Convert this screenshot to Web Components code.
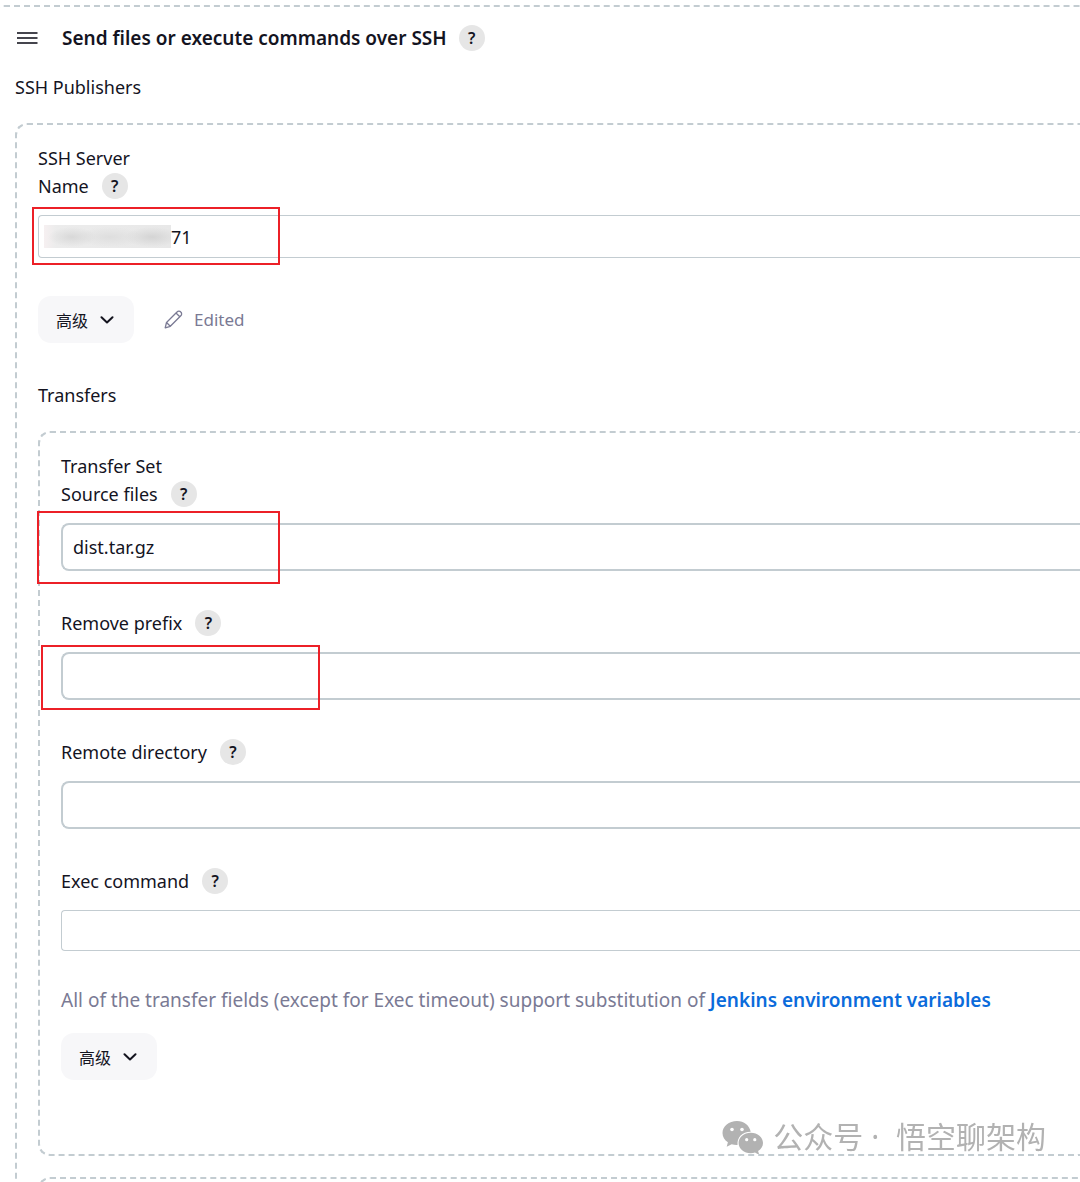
<!DOCTYPE html>
<html lang="en">
<head>
<meta charset="utf-8">
<title>SSH Publishers</title>
<style>
    html {
        overflow: hidden;
    }

    body {
        --text: #14141f;
        --muted: #7a7a94;
        --line: #c3ccd1;
        margin: 0;
        padding-top: 5px;
        background: #fff;
        color: var(--text);
        font: 18px/28px "Noto Sans", "Noto Sans CJK SC", sans-serif;
    }

    .outer {
        margin-left: -8px;
    }

    .server {
        margin-top: 22px;
    }

    .actions {
        display: flex;
        align-items: center;
        gap: 30px;
        margin: 38px 0;
    }

    .sets {
        display: grid;
        gap: 21px;
        margin-top: 22px;
    }

    .fields {
        display: grid;
        gap: 38px;
    }

    .note {
        margin: 35px 0 19px;
        color: var(--muted);
        font-size: 19px;
    }

    .note a {
        color: #0b6bdb;
        font-weight: 600;
        text-decoration: none;
    }

    .last {
        margin-bottom: 74px;
    }
</style>
</head>
<body>
<dashed-box class="outer">
    <section-title>Send files or execute commands over SSH</section-title>
    <div>SSH Publishers</div>
    <dashed-box class="server">
        <div>SSH Server</div>
        <form-field label="Name" type="select" value="71">
            <red-frame style="--x: -6px; --y: -8px; --w: 248px; --h: 58px"></red-frame>
        </form-field>
        <div class="actions">
            <advanced-button>高级</advanced-button>
            <edited-hint>Edited</edited-hint>
        </div>
        <div>Transfers</div>
        <div class="sets">
            <dashed-box>
                <div>Transfer Set</div>
                <div class="fields">
                    <form-field label="Source files" value="dist.tar.gz">
                        <red-frame style="--x: -24px; --y: -12px; --w: 243px; --h: 73px"></red-frame>
                    </form-field>
                    <form-field label="Remove prefix">
                        <red-frame style="--x: -20px; --y: -7px; --w: 279px; --h: 65px"></red-frame>
                    </form-field>
                    <form-field label="Remote directory"></form-field>
                    <form-field label="Exec command" type="textarea"></form-field>
                </div>
                <p class="note">All of the transfer fields (except for Exec timeout) support substitution of <a href="#env">Jenkins environment variables</a></p>
                <advanced-button class="last">高级</advanced-button>
            </dashed-box>
            <dashed-box></dashed-box>
        </div>
    </dashed-box>
</dashed-box>
<account-mark></account-mark>

<script>
/* 虚线容器 */
class DashedBox extends HTMLElement {
    constructor() {
        super();
        this.attachShadow({ mode: 'open' });
        this.shadowRoot.innerHTML = `
            <style>
                :host {
                    display: block;
                    box-sizing: border-box;
                    min-height: 48px;
                    padding: 19px 0 0 21px;
                    border: 2px dashed var(--line);
                    border-right: 0;
                    border-radius: 12px 0 0 12px;
                }
                :host(.outer) {
                    padding-top: 16px;
                }
            </style>
            <slot></slot>
        `;
    }
}

/* 圆形帮助按钮 */
class HelpButton extends HTMLElement {
    constructor() {
        super();
        this.attachShadow({ mode: 'open' });
        this.shadowRoot.innerHTML = `
            <style>
                :host {
                    display: inline-flex;
                }
                button {
                    width: 26px;
                    height: 26px;
                    padding: 0;
                    border: 0;
                    border-radius: 50%;
                    background: #e6e6e6;
                    color: var(--text);
                    font: 600 16px/26px "Noto Sans", sans-serif;
                    cursor: pointer;
                }
            </style>
            <button type="button">?</button>
        `;
    }
}

/* 带拖动图标的标题 */
class SectionTitle extends HTMLElement {
    constructor() {
        super();
        this.attachShadow({ mode: 'open' });
        this.shadowRoot.innerHTML = `
            <style>
                :host {
                    display: flex;
                    align-items: center;
                    height: 30px;
                    margin-bottom: 20px;
                }
                svg {
                    margin: 0 24px 0 2px;
                }
                h2 {
                    margin: 0 12px 0 0;
                    font-size: 19px;
                    font-weight: 600;
                }
            </style>
            <svg width="21" height="14" viewBox="0 0 21 14" stroke="#45454d" stroke-width="2" aria-hidden="true">
                <path d="M0 2h20.500M0 7h20.500M0 12h20.500"/>
            </svg>
            <h2><slot></slot></h2>
            <help-button></help-button>
        `;
    }
}

/**
 * 表单项
 * label - 标签文字
 * type - 'input'（默认）, 'select', 'textarea'
 * value - 初始值
 */
class FormField extends HTMLElement {
    constructor() {
        super();
        this.attachShadow({ mode: 'open' });
        this.shadowRoot.innerHTML = `
            <style>
                :host {
                    display: block;
                }
                .head {
                    display: flex;
                    align-items: center;
                    gap: 13px;
                    height: 28px;
                    margin-bottom: 15px;
                }
                .control {
                    position: relative;
                    display: grid;
                }
                input, select, textarea {
                    box-sizing: border-box;
                    width: 100%;
                    margin: 0;
                    border: 2px solid var(--line);
                    border-right: 0;
                    border-radius: 8px 0 0 8px;
                    background: #fff;
                    color: var(--text);
                    font: inherit;
                    outline: 0;
                }
                input {
                    height: 48px;
                    padding: 0 10px;
                }
                select {
                    appearance: none;
                    height: 43px;
                    padding: 0 0 0 132px;
                    border-width: 1px 0 1px 1px;
                    border-radius: 4px 0 0 4px;
                }
                textarea {
                    height: 41px;
                    padding: 5px 10px;
                    border-width: 1px 0 1px 1px;
                    border-radius: 4px 0 0 4px;
                    resize: none;
                    overflow: hidden;
                }
                /* 隐去的地址前缀 */
                .masked {
                    position: absolute;
                    left: 6px;
                    top: 10px;
                    width: 127px;
                    height: 23px;
                    background:
                        radial-gradient(ellipse 24px 10px at 28px 12px, #d8d8d8, transparent),
                        radial-gradient(ellipse 34px 10px at 66px 12px, #dedede, transparent),
                        radial-gradient(ellipse 28px 10px at 108px 12px, #d4d4d4, transparent),
                        linear-gradient(90deg, #f6f0f1, #ececec 12px, #e8e8e8);
                }
            </style>
            <div class="head">
                <label for="field"></label>
                <help-button></help-button>
            </div>
            <div class="control"><slot></slot></div>
        `;

        const type = this.getAttribute('type') || 'input';
        const value = this.getAttribute('value') || '';
        const control = document.createElement(type);
        control.id = 'field';
        if (type === 'select') {
            control.add(new Option(value));
        } else {
            control.value = value;
        }

        this.shadowRoot.querySelector('label').textContent = this.getAttribute('label');
        const wrap = this.shadowRoot.querySelector('.control');
        wrap.prepend(control);
        if (type === 'select') {
            const masked = document.createElement('span');
            masked.className = 'masked';
            control.after(masked);
        }
    }
}

/* 红色标注框 */
class RedFrame extends HTMLElement {
    constructor() {
        super();
        this.attachShadow({ mode: 'open' });
        this.shadowRoot.innerHTML = `
            <style>
                :host {
                    position: absolute;
                    left: var(--x);
                    top: var(--y);
                    box-sizing: border-box;
                    width: var(--w);
                    height: var(--h);
                    border: 2px solid #ec2027;
                    pointer-events: none;
                }
            </style>
        `;
    }
}

/* 高级按钮 */
class AdvancedButton extends HTMLElement {
    constructor() {
        super();
        this.attachShadow({ mode: 'open' });
        this.shadowRoot.innerHTML = `
            <style>
                :host {
                    display: flex;
                }
                button {
                    display: flex;
                    align-items: center;
                    gap: 12px;
                    height: 47px;
                    padding: 0 20px 0 18px;
                    border: 0;
                    border-radius: 13px;
                    background: #f7f7f9;
                    color: var(--text);
                    font: 16px/28px "Noto Sans CJK SC", sans-serif;
                    cursor: pointer;
                }
            </style>
            <button type="button">
                <slot></slot>
                <svg width="14" height="8" viewBox="0 0 14 8" fill="none" stroke="#14141f" stroke-width="2" stroke-linecap="round" stroke-linejoin="round" aria-hidden="true">
                    <path d="M1.500 1.200L7 6.500l5.500-5.300"/>
                </svg>
            </button>
        `;
    }
}

/* 已编辑提示 */
class EditedHint extends HTMLElement {
    constructor() {
        super();
        this.attachShadow({ mode: 'open' });
        this.shadowRoot.innerHTML = `
            <style>
                :host {
                    display: flex;
                    align-items: center;
                    gap: 11px;
                    color: var(--muted);
                    font-size: 17px;
                }
            </style>
            <svg width="19" height="19" viewBox="0 0 19 19" fill="none" stroke="currentColor" stroke-width="1.300" stroke-linejoin="round" aria-hidden="true">
                <path d="M1.200 17.800l1.300-5.300L13 2a2.600 2.600 0 0 1 3.800 0 2.600 2.600 0 0 1 0 3.800L6.300 16.300zM12 3l3.800 3.800M2.500 12.500l3.800 3.800"/>
            </svg>
            <slot></slot>
        `;
    }
}

/* 右下角公众号水印 */
class AccountMark extends HTMLElement {
    constructor() {
        super();
        this.attachShadow({ mode: 'open' });
        this.shadowRoot.innerHTML = `
            <style>
                :host {
                    position: fixed;
                    right: 34px;
                    bottom: 24px;
                    display: flex;
                    align-items: center;
                    gap: 9px;
                    color: #b2b2b2;
                    font: 30px/42px "Noto Sans", "Noto Sans CJK SC", sans-serif;
                    white-space: pre;
                    pointer-events: none;
                }
            </style>
            <svg width="42" height="34" viewBox="0 0 42 34" fill="#b2b2b2" aria-hidden="true">
                <path d="M15 1C7 1 .5 6.300.5 13c0 3.900 2 7 5.400 9.200L4.700 26.800l5-2.600c1.800.5 3.600.8 5.800.7C15 17.500 20 12 28.700 11.800 27.500 5.500 22 1 15 1z"/>
                <path d="M28.800 12.800c-6.800 0-12.200 4.500-12.200 10.200s5.400 10.200 12.200 10.200c1.500 0 2.900-.2 4.200-.6l4.200 2.200-1.100-3.700c3-1.900 4.900-4.800 4.900-8.100 0-5.700-5.400-10.200-12.200-10.200z"/>
                <g fill="#fff">
                    <circle cx="10" cy="9.500" r="1.800"/>
                    <circle cx="20" cy="9.500" r="1.800"/>
                    <circle cx="24.700" cy="19.700" r="1.600"/>
                    <circle cx="32.800" cy="19.700" r="1.600"/>
                </g>
            </svg>
            <span>公众号 ·</span><span> 悟空聊架构</span>
        `;
    }
}

// 注册自定义元素
customElements.define('dashed-box', DashedBox);
customElements.define('help-button', HelpButton);
customElements.define('section-title', SectionTitle);
customElements.define('form-field', FormField);
customElements.define('red-frame', RedFrame);
customElements.define('advanced-button', AdvancedButton);
customElements.define('edited-hint', EditedHint);
customElements.define('account-mark', AccountMark);
</script>
</body>
</html>
